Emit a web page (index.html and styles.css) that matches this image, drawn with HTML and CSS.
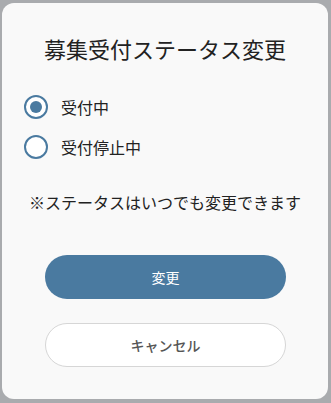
FILE: index.html
```html
<!DOCTYPE html>
<html lang="ja">
<head>
<meta charset="utf-8">
<link rel="stylesheet" href="styles.css">
</head>
<body>
<div class="dialog">
  <h1 class="title">募集受付ステータス変更</h1>
  <div class="options">
    <label class="option"><span class="radio checked"><span class="dot"></span></span><span class="label">受付中</span></label>
    <label class="option"><span class="radio"></span><span class="label">受付停止中</span></label>
  </div>
  <p class="note">※ステータスはいつでも変更できます</p>
  <div class="actions">
    <button class="btn primary">変更</button>
    <button class="btn secondary">キャンセル</button>
  </div>
</div>
</body>
</html>
```
FILE: styles.css
```css
html, body {
  margin: 0;
  padding: 0;
}
body {
  background: #a9abae;
  padding: 3px 3px 4px 2px;
  width: 331px;
  height: 403px;
  box-sizing: border-box;
  font-family: "Noto Sans CJK JP", "Noto Sans", sans-serif;
}
.dialog {
  background: #f9f9f9;
  border-radius: 12px;
  height: 396px;
  box-sizing: border-box;
  padding-top: 32px;
  display: flex;
  flex-direction: column;
}
.title {
  margin: 0;
  font-size: 22px;
  font-weight: 400;
  line-height: 26px;
  text-align: center;
  color: #222;
}
.options {
  margin-top: 34px;
  padding-left: 22px;
  display: flex;
  flex-direction: column;
  gap: 16px;
}
.option {
  display: flex;
  align-items: center;
  gap: 13px;
  height: 24px;
}
.radio {
  width: 24px;
  height: 24px;
  box-sizing: border-box;
  border: 2px solid #4a7aa0;
  border-radius: 50%;
  background: #fff;
  display: flex;
  align-items: center;
  justify-content: center;
}
.dot {
  width: 12px;
  height: 12px;
  border-radius: 50%;
  background: #4a7aa0;
}
.label {
  font-size: 16px;
  color: #222;
  line-height: 24px;
}
.note {
  margin: 31px 0 0;
  font-size: 16px;
  line-height: 24px;
  color: #222;
  text-align: center;
}
.actions {
  margin-top: 41px;
  display: flex;
  flex-direction: column;
  align-items: center;
  gap: 24px;
}
.btn {
  width: 241px;
  height: 44px;
  border-radius: 22px;
  font-family: inherit;
  font-size: 14px;
  cursor: pointer;
  margin-left: 1px;
}
.primary {
  background: #4a7aa0;
  border: none;
  color: #fff;
}
.secondary {
  background: #fff;
  border: 1px solid #d6d6d6;
  color: #555;
  font-weight: 500;
}
```
